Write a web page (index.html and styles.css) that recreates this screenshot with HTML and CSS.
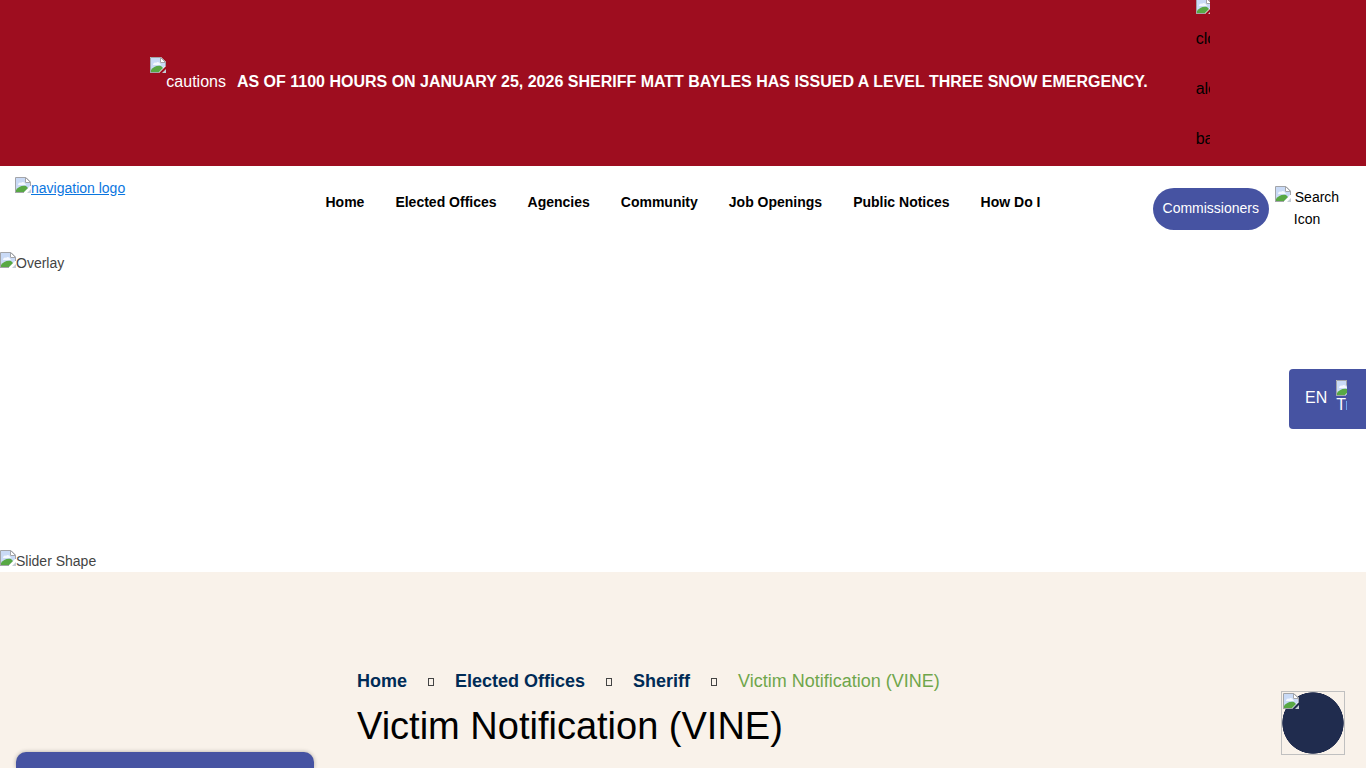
FILE: index.html
```html
<!DOCTYPE html>
<html lang="en">
<head>
<meta charset="utf-8">
<meta name="viewport" content="width=device-width, initial-scale=1">
<title>Victim Notification (VINE)</title>
<link rel="stylesheet" href="styles.css">
</head>
<body>
<svg class="sprite" aria-hidden="true">
  <symbol id="missing" viewBox="0 0 16 16">
    <path d="M0 0h11l5 5v4l-7 7H0z" fill="#fff"/>
    <path d="M1 1h9v5h5v3l-6 6H1z" fill="#c9daf6"/>
    <path d="M3 8c0-2 2-3 3-2 1-2 4-1 4 1 1 0 1 1 1 1z" fill="#f4f8ff"/>
    <path d="M1 15v-2c2-3 6-5 10-4l2 2-4 4z" fill="#58a844"/>
    <path d="M.5 16V.5H11l4.500 4.500V9" fill="none" stroke="#a3a5a9"/>
    <path d="M10.500 .5V5.500h5L11 1z" fill="#fff" stroke="#a3a5a9"/>
    <path d="M0 15.500h9" stroke="#a3a5a9"/>
    <path d="M16 12v4h-4z" fill="#c4cdd6"/>
  </symbol>
</svg>

<section class="alert">
  <div class="alert-message">
    <span class="alert-icon"><svg class="missing"><use href="#missing"/></svg><span class="alert-alt">cautions</span></span>
    <strong>AS OF 1100 HOURS ON JANUARY 25, 2026 SHERIFF MATT BAYLES HAS ISSUED A LEVEL THREE SNOW EMERGENCY.</strong>
  </div>
  <button class="alert-close" type="button"><svg class="missing"><use href="#missing"/></svg><span>close</span><span>alert</span><span>bar</span></button>
</section>

<header class="header">
  <a class="logo" href="#"><svg class="missing"><use href="#missing"/></svg><span>navigation logo</span></a>
  <nav class="nav" aria-label="Main">
    <a href="#">Home</a>
    <a href="#">Elected Offices</a>
    <a href="#">Agencies</a>
    <a href="#">Community</a>
    <a href="#">Job Openings</a>
    <a href="#">Public Notices</a>
    <a href="#">How Do I</a>
  </nav>
  <div class="actions">
    <a class="pill" href="#">Commissioners</a>
    <button class="search" type="button"><svg class="missing"><use href="#missing"/></svg> Search Icon</button>
  </div>
</header>

<section class="hero">
  <div class="picture"><svg class="missing"><use href="#missing"/></svg><span>Overlay</span></div>
  <div class="picture"><svg class="missing"><use href="#missing"/></svg><span>Slider Shape</span></div>
</section>

<main class="content">
  <aside class="sidebar" aria-label="Section menu"></aside>
  <article class="article">
    <nav class="crumbs" aria-label="Breadcrumb">
      <a href="#">Home</a><i class="separator"></i>
      <a href="#">Elected Offices</a><i class="separator"></i>
      <a href="#">Sheriff</a><i class="separator"></i>
      <span>Victim Notification (VINE)</span>
    </nav>
    <h1>Victim Notification (VINE)</h1>
  </article>
</main>

<button class="language" type="button"><span>EN</span><span class="language-icon"><svg class="missing"><use href="#missing"/></svg><span>Translate</span></span></button>
<button class="assistant" type="button" aria-label="Open assistant"><svg class="missing"><use href="#missing"/></svg></button>
</body>
</html>
```
FILE: styles.css
```css
* { box-sizing: border-box; }
body {
  display: flex;
  flex-direction: column;
  margin: 0;
  min-height: 100vh;
  background: #fff;
  color: #444;
  font: 14px/22px "Liberation Sans", Arial, sans-serif;
}
button { font: inherit; border: 0; padding: 0; cursor: pointer; }
.sprite { display: none; }
.missing { width: 16px; height: 16px; flex: none; }

.alert {
  display: flex;
  justify-content: center;
  gap: 48px;
  padding-right: 6px;
  background: #9e0d1f;
  color: #fff;
  font-size: 16px;
}
.alert-message { display: flex; align-items: center; gap: 11px; padding-bottom: 2px; }
.alert-icon { display: flex; align-items: flex-start; padding-bottom: 32px; }
.alert-alt { padding-top: 14px; margin-bottom: -18px; }
.alert-close {
  display: flex;
  flex-direction: column;
  justify-content: flex-end;
  align-items: flex-start;
  width: 14px;
  height: 166px;
  padding-bottom: 2px;
  overflow: hidden;
  background: none;
  color: #000;
  line-height: 50px;
}

.header {
  display: grid;
  grid-template-columns: 1fr auto 1fr;
  align-items: start;
  padding: 11px 21px 22px 15px;
}
.logo { display: flex; color: #0b76e0; }
.nav { display: flex; gap: 31px; padding: 14px 0 0 6px; }
.nav a { color: #000; font-weight: bold; text-decoration: none; }
.actions { display: flex; justify-content: flex-end; gap: 4px; padding-top: 9px; }
.pill {
  margin-top: 2px;
  padding: 9px 10px 10px;
  border-radius: 24px;
  background: #4653a2;
  color: #fff;
  text-decoration: none;
}
.search { width: 72px; padding-right: 4px; background: none; color: #000; }

.hero { display: flex; flex-direction: column; justify-content: space-between; height: 320px; }
.picture { display: flex; }

.content {
  flex: 1;
  display: grid;
  grid-template-columns: 298px 1fr;
  gap: 43px;
  padding: 98px 16px 0;
  background: #f9f2ea;
}
.sidebar {
  margin-top: 82px;
  border-radius: 10px 10px 0 0;
  background: #4653a2;
  box-shadow: 0 0 4px rgba(0, 0, 0, 0.3);
}
.crumbs { display: flex; align-items: center; color: #6fa64b; font-size: 18px; }
.crumbs a { color: #002b56; font-weight: bold; text-decoration: none; }
.separator { width: 6px; height: 8px; margin: 2px 21px 0 21px; border: 1px solid #444; }
h1 { margin: 10px 0 0; color: #000; font-size: 38px; line-height: 48px; font-weight: normal; }

.language {
  position: fixed;
  top: 369px;
  right: 0;
  display: flex;
  gap: 9px;
  width: 77px;
  height: 60px;
  padding: 11px 16px;
  border-radius: 4px 0 0 4px;
  background: #4653a2;
  color: #fff;
  font-size: 16px;
  line-height: 35px;
}
.language-icon { display: flex; flex-direction: column; width: 11px; height: 31px; overflow: hidden; text-align: left; line-height: 18px; }
.assistant {
  position: fixed;
  right: 21px;
  bottom: 13px;
  display: flex;
  width: 64px;
  height: 64px;
  padding: 1px;
  border: 1px solid #c0c0c0;
  background: radial-gradient(circle closest-side, #202c4e 98%, transparent);
}
```
